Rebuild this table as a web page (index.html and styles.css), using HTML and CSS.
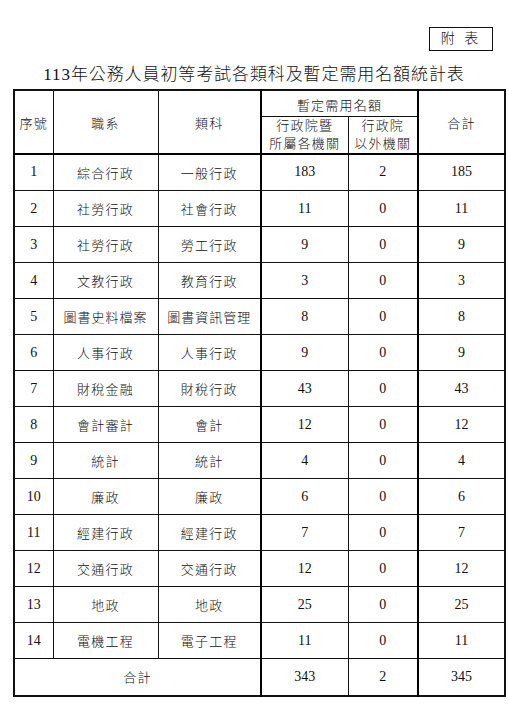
FILE: index.html
```html
<!DOCTYPE html>
<html lang="zh-Hant">
<head>
<meta charset="utf-8">
<title>113年公務人員初等考試各類科及暫定需用名額統計表</title>
<link rel="stylesheet" href="styles.css">
</head>
<body>
<div class="page">
  <div class="tag-row"><div class="tag">附 表</div></div>
  <h1 class="title">113年公務人員初等考試各類科及暫定需用名額統計表</h1>
  <table class="stats">
    <colgroup>
      <col class="c-no"><col class="c-dept"><col class="c-cat"><col class="c-a"><col class="c-b"><col class="c-sum">
    </colgroup>
    <thead>
      <tr class="h1">
        <th rowspan="2" class="low">序號</th>
        <th rowspan="2" class="low">職系</th>
        <th rowspan="2" class="low thick-r">類科</th>
        <th colspan="2" class="thick-r">暫定需用名額</th>
        <th rowspan="2" class="low">合計</th>
      </tr>
      <tr class="h2">
        <th class="two">行政院暨<br>所屬各機關</th>
        <th class="two thick-r">行政院<br>以外機關</th>
      </tr>
    </thead>
    <tbody>
      <tr><td class="num">1</td><td>綜合行政</td><td class="thick-r">一般行政</td><td class="num">183</td><td class="num thick-r">2</td><td class="num">185</td></tr>
      <tr><td class="num">2</td><td>社勞行政</td><td class="thick-r">社會行政</td><td class="num">11</td><td class="num thick-r">0</td><td class="num">11</td></tr>
      <tr><td class="num">3</td><td>社勞行政</td><td class="thick-r">勞工行政</td><td class="num">9</td><td class="num thick-r">0</td><td class="num">9</td></tr>
      <tr><td class="num">4</td><td>文教行政</td><td class="thick-r">教育行政</td><td class="num">3</td><td class="num thick-r">0</td><td class="num">3</td></tr>
      <tr><td class="num">5</td><td class="tight">圖書史料檔案</td><td class="tight thick-r">圖書資訊管理</td><td class="num">8</td><td class="num thick-r">0</td><td class="num">8</td></tr>
      <tr><td class="num">6</td><td>人事行政</td><td class="thick-r">人事行政</td><td class="num">9</td><td class="num thick-r">0</td><td class="num">9</td></tr>
      <tr><td class="num">7</td><td>財稅金融</td><td class="thick-r">財稅行政</td><td class="num">43</td><td class="num thick-r">0</td><td class="num">43</td></tr>
      <tr><td class="num">8</td><td>會計審計</td><td class="thick-r">會計</td><td class="num">12</td><td class="num thick-r">0</td><td class="num">12</td></tr>
      <tr><td class="num">9</td><td>統計</td><td class="thick-r">統計</td><td class="num">4</td><td class="num thick-r">0</td><td class="num">4</td></tr>
      <tr><td class="num">10</td><td>廉政</td><td class="thick-r">廉政</td><td class="num">6</td><td class="num thick-r">0</td><td class="num">6</td></tr>
      <tr><td class="num">11</td><td>經建行政</td><td class="thick-r">經建行政</td><td class="num">7</td><td class="num thick-r">0</td><td class="num">7</td></tr>
      <tr><td class="num">12</td><td>交通行政</td><td class="thick-r">交通行政</td><td class="num">12</td><td class="num thick-r">0</td><td class="num">12</td></tr>
      <tr><td class="num">13</td><td>地政</td><td class="thick-r">地政</td><td class="num">25</td><td class="num thick-r">0</td><td class="num">25</td></tr>
      <tr><td class="num">14</td><td>電機工程</td><td class="thick-r">電子工程</td><td class="num">11</td><td class="num thick-r">0</td><td class="num">11</td></tr>
    </tbody>
    <tfoot>
      <tr class="total"><td colspan="3" class="thick-r">合計</td><td class="num">343</td><td class="num thick-r">2</td><td class="num">345</td></tr>
    </tfoot>
  </table>
</div>
</body>
</html>
```

FILE: styles.css
```css
html, body {
  margin: 0;
  padding: 0;
  background: #ffffff;
  color: #111111;
  font-family: "Liberation Serif", "Noto Sans CJK TC", serif;
}

.page {
  width: 491px;
  margin-left: 13px;
  padding-top: 27px;
}

.tag-row {
  display: flex;
  justify-content: flex-end;
  padding-right: 11px;
}

.tag {
  box-sizing: border-box;
  width: 64px;
  height: 24px;
  border: 1px solid #111;
  font-size: 14px;
  line-height: 22px;
  letter-spacing: 3px;
  text-align: center;
  font-weight: 300;
}

.title {
  margin: 11px 0 2px -9px;
  font-size: 17px;
  line-height: 25px;
  font-weight: 300;
  letter-spacing: 0.9px;
  text-align: center;
}

.stats {
  border-collapse: collapse;
  table-layout: fixed;
  width: 491px;
  font-size: 13px;
  font-weight: 300;
  border: 2px solid #111;
}

.c-no { width: 39px; }
.c-dept { width: 105px; }
.c-cat { width: 103px; }
.c-a { width: 87px; }
.c-b { width: 70px; }
.c-sum { width: 87px; }

.stats th,
.stats td {
  border: 1.5px solid #111;
  padding: 0;
  text-align: center;
  vertical-align: middle;
  font-weight: 300;
  letter-spacing: 1.2px;
  white-space: nowrap;
}

.stats .thick-r { border-right: 2.5px solid #000; }

.stats thead tr.h2 th { border-bottom: 2.5px solid #000; }
.stats thead th.low { border-bottom: 2.5px solid #000; padding-top: 1px; }

.h1 { height: 26px; }
.h2 { height: 37px; }
.h1 th { padding-top: 2px; }
.two { line-height: 18px; letter-spacing: 2px; }

.stats tbody tr { height: 36px; }
.stats tbody tr:first-child { height: 37px; }
.stats .total { height: 37px; }
.stats .total td { border-bottom-width: 1px; }

.stats td.num {
  font-size: 14px;
  letter-spacing: 0;
}

.stats td.tight { letter-spacing: 1px; }
```
